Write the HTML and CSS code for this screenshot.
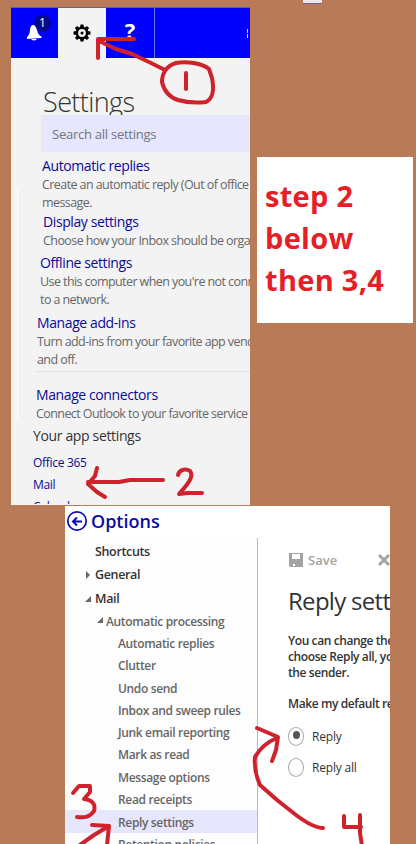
FILE: index.html
```html
<!DOCTYPE html>
<html lang="en">
<head>
<meta charset="utf-8">
<title>Reply settings guide</title>
<link rel="stylesheet" href="styles.css">
</head>
<body>
<main class="board">
  <div class="top">
    <section class="settings">
      <header class="bar">
        <div class="cell bell">
          <svg width="47" height="50" viewBox="0 0 47 50"><circle cx="31.500" cy="15.500" r="8.500" fill="#08088f"/><path d="M22 17c2 0 3 2 4 5 1 4 2 5 5 7l-1 1-14 1v-2c3-3 3-6 3-8 1-3 1-4 3-4z" fill="#fff"/><path d="M20 31h6q-3 3-6 0z" fill="#fff"/></svg>
          <span class="badge">1</span>
        </div>
        <div class="cell gear">
          <svg width="18" height="18" viewBox="-9 -9 18 18"><g fill="#000"><path id="t" d="M-2-5.500L-1.500-8.500H1.500L2-5.500V5.500L1.500 8.500H-1.500L-2 5.500z"/><use href="#t" transform="rotate(45)"/><use href="#t" transform="rotate(90)"/><use href="#t" transform="rotate(135)"/><circle r="6.300"/></g><circle r="3.900" fill="#f3f3f3"/><circle r="1.500" fill="#000"/></svg>
        </div>
        <div class="cell help">?</div>
        <div class="rest"><i></i></div>
      </header>
      <h1>Settings</h1>
      <div class="search">Search all settings</div>
      <div class="list">
        <article class="auto"><h2>Automatic replies</h2><p>Create an automatic reply (Out of office</p><p>message.</p></article>
        <article class="display"><h2>Display settings</h2><p>Choose how your Inbox should be orga</p></article>
        <article class="offline"><h2>Offline settings</h2><p>Use this computer when you're not conn</p><p>to a network.</p></article>
        <article class="addins"><h2>Manage add-ins</h2><p>Turn add-ins from your favorite app vend</p><p>and off.</p></article>
        <article class="connectors"><h2>Manage connectors</h2><p>Connect Outlook to your favorite service</p></article>
        <div class="apps"><h3>Your app settings</h3><a>Office 365</a><a>Mail</a><a class="cut">Calendar</a></div>
      </div>
    </section>
    <aside class="side">
      <div class="handle"></div>
      <div class="note"><span>step 2</span><span>below</span><span>then 3,4</span></div>
    </aside>
  </div>
  <section class="options">
    <header class="title">
      <svg width="22" height="22" viewBox="0 0 22 22" fill="none" stroke="#0a0aa8"><circle cx="11" cy="11" r="9.200" stroke-width="1.700"/><path d="M16 11.500H7M11 7.500l-4 4 4 4" stroke-width="2"/></svg>
      <span>Options</span>
    </header>
    <div class="columns">
      <nav>
        <div class="l1"><span>Shortcuts</span></div>
        <div class="l1 gen"><svg width="10" height="10"><path d="M2 1l4 4-4 4z" fill="#666"/></svg><span>General</span></div>
        <div class="l1 mail"><svg width="10" height="10"><path d="M7 2v6H1z" fill="#666"/></svg><span>Mail</span></div>
        <div class="l2"><svg width="10" height="10"><path d="M7 1v6H1z" fill="#666"/></svg><span>Automatic processing</span></div>
        <div class="l3">Automatic replies</div>
        <div class="l3">Clutter</div>
        <div class="l3">Undo send</div>
        <div class="l3">Inbox and sweep rules</div>
        <div class="l3">Junk email reporting</div>
        <div class="l3">Mark as read</div>
        <div class="l3">Message options</div>
        <div class="l3">Read receipts</div>
        <div class="l3 on">Reply settings</div>
        <div class="l3">Retention policies</div>
      </nav>
      <div class="detail">
        <div class="tools">
          <svg width="14" height="14" viewBox="0 0 14 14"><path d="M0 0h14v14H1l-1-1z" fill="#a3a3a3"/><path d="M3 1h8v5H3z" fill="#fff"/><path d="M4 11h2v2H4z" fill="#fff"/></svg>
          <span>Save</span>
          <svg class="x" width="12" height="12" viewBox="0 0 12 12"><path d="M1 1l10 10M11 1L1 11" stroke="#a3a3a3" stroke-width="3"/></svg>
        </div>
        <h2>Reply sett</h2>
        <div class="copy"><p>You can change the</p><p>choose Reply all, yo</p><p>the sender.</p></div>
        <p class="ask">Make my default re</p>
        <div class="radio first"><i class="sel"></i><span>Reply</span></div>
        <div class="radio"><i></i><span>Reply all</span></div>
      </div>
    </div>
  </section>
  <svg class="ink" width="416" height="844" viewBox="0 0 416 844">
    <path d="M165 70L149 62 132 54 116 49 99 41M134 39H98V58"/>
    <path d="M176 63C166 66 162 74 162 82 164 91 169 97 178 100 188 103 197 103 206 102 214 98 214 88 212 78L209 69C202 63 186 61 176 63zM186 73V89"/>
    <path d="M163 480H130L119 482H88M97 468L95 476 88 484 97 492 105 497"/>
    <path d="M178 475C179 470 185 468 190 471 194 476 189 483 179 494L188 493 202 493"/>
    <path d="M73 793L79 786H90L90 792 84 799C92 800 96 804 94 811 90 817 85 818 77 817"/>
    <path d="M80 845L94 835 109 826M92 825L109 826 107 845"/>
    <path d="M323 828C315 828 304 821 296 815L277 800 260 785C256 776 254 766 255 757 259 750 267 742 277 738M257 728L278 737 276 750 272 761"/>
    <path d="M344 816V827H361M360 815V833L362 846"/>
  </svg>
</main>
</body>
</html>
```
FILE: styles.css
```css
* { box-sizing: border-box; }
body, h1, h2, h3, p { margin: 0; font-weight: 400; }
body { font-family: "Open Sans", "Noto Sans", sans-serif; background: #b87a57; }
svg { display: block; flex: none; }
.board { position: relative; width: 416px; height: 844px; overflow: hidden; background: #b87a57; }
.top { display: flex; height: 506px; padding-left: 11px; gap: 7px; }
.settings { width: 239px; height: 498px; margin-top: 7px; background: linear-gradient(#fff, #fff) 6px 180px / 1px 233px no-repeat #f3f3f3; border-top: 1px solid #6b6480; overflow: hidden; white-space: nowrap; }
.bar { display: flex; height: 50px; background: #0000fd; color: #fff; }
.cell { position: relative; display: flex; align-items: center; justify-content: center; width: 48px; flex: none; }
.bell { width: 47px; }
.badge { position: absolute; left: 28px; top: 7px; font-size: 12px; line-height: 16px; }
.gear { background: #f3f3f3; }
.help { font-weight: 700; font-size: 22px; line-height: 44px; padding-bottom: 6px; border-right: 1px solid #6a6af0; width: 49px; }
.rest { flex: 1; display: flex; justify-content: flex-end; padding: 21px 2px 0 0; }
.rest i { width: 1px; height: 9px; background: linear-gradient(#d8d8ff 4px, #0000fd 4px, #0000fd 5px, #d8d8ff 5px); }
h1 { height: 57px; padding: 27px 0 0 32px; font-size: 27px; line-height: 34px; font-weight: 300; letter-spacing: -0.6px; color: #333; overflow: hidden; }
.search { height: 37px; margin-left: 30px; padding-left: 11px; background: #e6e6fc; color: #74747f; font-size: 13px; line-height: 38px; letter-spacing: -0.25px; }
.list { padding-top: 4px; }
.list h2 { font-size: 14px; line-height: 20px; height: 20px; letter-spacing: -0.4px; color: #0a0a96; }
.list p { font-size: 12.500px; line-height: 18px; height: 18px; letter-spacing: -0.58px; color: #666; }
.auto { padding-left: 31px; }
.display { padding-left: 32px; height: 41px; }
.offline { padding-left: 29px; height: 60px; }
.addins { padding-left: 26px; height: 58px; }
.connectors { margin-left: 25px; padding-top: 13px; border-top: 1px solid #e2e2e6; height: 55px; }
.apps { padding-left: 22px; }
.apps h3 { font-size: 14px; line-height: 20px; color: #333; letter-spacing: -0.35px; margin-bottom: 8px; }
.apps a { display: block; height: 22px; line-height: 18px; font-size: 12px; letter-spacing: -0.3px; color: #0a0a96; }
.apps .cut { height: 6px; overflow: hidden; }
.side { width: 156px; }
.handle { width: 19px; height: 4px; margin-left: 46px; background: #e8e6ee; border-bottom: 1px solid #6b6480; }
.note { display: flex; flex-direction: column; height: 166px; margin-top: 153px; padding: 18px 0 0 8px; background: #fff; color: #e61e28; font-size: 29px; font-weight: 700; line-height: 42px; letter-spacing: 0.3px; white-space: nowrap; }
.options { width: 325px; height: 338px; margin-left: 65px; background: #fff; overflow: hidden; white-space: nowrap; }
.title { display: flex; align-items: center; height: 32px; padding: 0 0 3px 1px; gap: 3px; font-size: 18px; font-weight: 600; color: #0a0aa8; }
.columns { display: flex; height: 306px; }
nav { width: 192px; flex: none; font-weight: 600; color: #666; font-size: 12px; letter-spacing: -0.35px; background: #fdfdfd; }
.l1 { display: flex; align-items: center; height: 23px; padding-left: 30px; color: #333; font-size: 12.500px; margin-top: 2px; }
.gen { margin-top: 0; }
.mail { margin-top: 1px; }
.gen, .mail { padding-left: 19px; gap: 1px; }
.l2 { display: flex; align-items: center; height: 22px; padding-left: 31px; }
.l3 { height: 22.300px; line-height: 24px; padding-left: 53px; }
.on { background: #e6e6fc; line-height: 25px; }
.detail { width: 133px; border-left: 1px solid #bbb; padding-left: 30px; overflow: hidden; color: #333; }
.tools { display: flex; align-items: center; height: 16px; margin-top: 14px; margin-left: 1px; font-size: 13px; font-weight: 600; color: #a3a3a3; }
.tools span { margin-left: 5px; width: 73px; }
.detail h2 { font-size: 24px; line-height: 32px; margin-top: 17px; letter-spacing: -0.7px; }
.copy p, .ask { font-size: 12px; font-weight: 600; line-height: 16px; letter-spacing: -0.4px; }
.copy { margin-top: 16px; }
.ask { margin-top: 15px; }
.radio { display: flex; align-items: center; height: 20px; margin-top: 11px; gap: 8px; font-size: 12px; letter-spacing: -0.2px; }
.first { margin-top: 14px; }
.radio i { display: flex; width: 16px; height: 19px; border: 1px solid #aaa; border-radius: 50%; }
.sel::after { content: ""; width: 7px; height: 8px; margin: 3px 0 0 4px; border-radius: 50%; background: #555; }
.ink { position: absolute; left: 0; top: 0; fill: none; stroke: #d0222c; stroke-width: 4; stroke-linecap: round; stroke-linejoin: round; }
```
